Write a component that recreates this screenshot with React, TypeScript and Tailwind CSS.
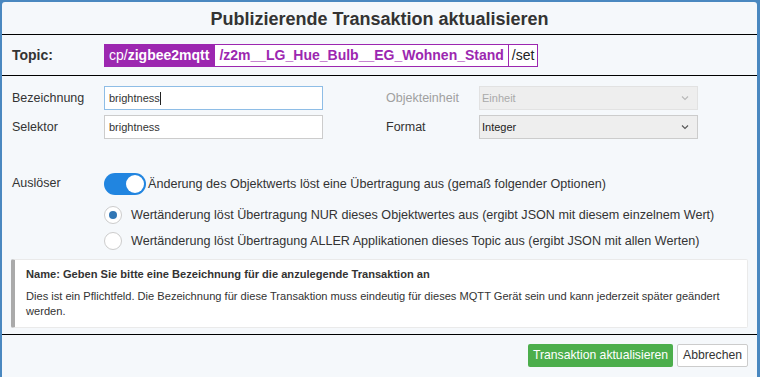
import React from "react";

const font = { fontFamily: '"Liberation Sans", Arial, sans-serif' };

function Chevron({ muted }: { muted?: boolean }) {
  return (
    <svg width="8" height="6" viewBox="0 0 8 6" className="mr-[8px]">
      <path d="M1 1.5 L4 4.5 L7 1.5" fill="none" stroke={muted ? "#b8b8b8" : "#555"} strokeWidth="1.1" />
    </svg>
  );
}

export default function App() {
  return (
    <div className="w-[760px] h-[377px] bg-[#4a88c0] pt-[2px] pl-[2px] overflow-hidden" style={font}>
      <div className="w-[755px] h-[375px] bg-[#f5f8fb] rounded-t-[3px] flex flex-col text-[#333]">
        {/* Header */}
        <div className="h-[33px] flex items-center justify-center border-b border-black">
          <h1 className="text-[18px] font-bold text-[#333] leading-none mt-[1px]">
            Publizierende Transaktion aktualisieren
          </h1>
        </div>

        {/* Topic */}
        <div className="h-[41px] flex items-center pl-[10px] border-b border-black">
          <span className="w-[92px] text-[14px] font-bold">Topic:</span>
          <div className="flex h-[23px] text-[14px] leading-none">
            <span className="flex items-center px-[5px] bg-[#9c27b0] text-white">
              cp/<b>zigbee2mqtt</b>
            </span>
            <span className="flex items-center px-[4px] border border-[#9c27b0] text-[#9c27b0] font-bold bg-white">
              /z2m__LG_Hue_Bulb__EG_Wohnen_Stand
            </span>
            <span className="flex items-center px-[3px] border border-l-0 border-[#9c27b0] text-[#222] bg-white">
              /set
            </span>
          </div>
        </div>

        {/* Body */}
        <div className="flex-1 pl-[10px] pr-[8px] pt-[10px]">
          <div className="flex">
            <div className="flex flex-col gap-[5px]">
              <div className="flex items-center">
                <span className="w-[92px] text-[12.5px]">Bezeichnung</span>
                <div className="w-[219px] h-[24px] bg-white border border-[#8ebde6] flex items-center pl-[4px] text-[11px] text-[#333]">
                  brightness<span className="inline-block w-px h-[13px] bg-[#222]" />
                </div>
              </div>
              <div className="flex items-center">
                <span className="w-[92px] text-[12.5px]">Selektor</span>
                <div className="w-[219px] h-[24px] bg-white border border-[#ccc] flex items-center pl-[4px] text-[11px] text-[#333]">
                  brightness
                </div>
              </div>
            </div>
            <div className="flex flex-col gap-[5px] ml-[63px]">
              <div className="flex items-center">
                <span className="w-[93px] text-[12.5px] text-[#a0a0a0]">Objekteinheit</span>
                <div className="w-[219px] h-[24px] bg-[#eeeeee] border border-[#e2e2e2] flex items-center justify-between pl-[2px] text-[11px] text-[#aaa]">
                  Einheit
                  <Chevron muted />
                </div>
              </div>
              <div className="flex items-center">
                <span className="w-[93px] text-[12.5px]">Format</span>
                <div className="w-[219px] h-[24px] bg-[#eeeeee] border border-[#ccc] flex items-center justify-between pl-[2px] text-[11px] text-[#222]">
                  Integer
                  <Chevron />
                </div>
              </div>
            </div>
          </div>

          {/* Trigger */}
          <div className="flex mt-[34px]">
            <span className="w-[92px] text-[12.5px] pt-[1px]">Auslöser</span>
            <div className="flex flex-col">
              <div className="flex items-center h-[22px]">
                <div className="w-[42px] h-[22px] rounded-full bg-[#2185e0] flex items-center justify-end pr-[2px]">
                  <div className="w-[18px] h-[18px] rounded-full bg-white" />
                </div>
                <span className="ml-[2px] text-[12.6px]">
                  Änderung des Objektwerts löst eine Übertragung aus (gemaß folgender Optionen)
                </span>
              </div>
              <div className="flex flex-col gap-[7px] mt-[11px]">
                <label className="flex items-center text-[12.6px]">
                  <span className="w-[18px] h-[18px] rounded-full bg-white border border-[#ccc] flex items-center justify-center">
                    <span className="w-[8px] h-[8px] rounded-full bg-[#3277b5]" />
                  </span>
                  <span className="ml-[9px]">
                    Wertänderung löst Übertragung NUR dieses Objektwertes aus (ergibt JSON mit diesem einzelnem Wert)
                  </span>
                </label>
                <label className="flex items-center text-[12.6px]">
                  <span className="w-[18px] h-[18px] rounded-full bg-white border border-[#ccc]" />
                  <span className="ml-[9px]">
                    Wertänderung löst Übertragung ALLER Applikationen dieses Topic aus (ergibt JSON mit allen Werten)
                  </span>
                </label>
              </div>
            </div>
          </div>

          {/* Info */}
          <div className="mt-[8px] ml-[-1px] w-[737px] h-[69px] bg-white border border-[#eaeaea] border-l-[4px] border-l-[#aaa] rounded-[2px] pl-[11px] pt-[7px] text-[11.1px] leading-[15px] text-[#333]">
            <div className="font-bold">Name: Geben Sie bitte eine Bezeichnung für die anzulegende Transaktion an</div>
            <div className="mt-[7px] pr-[12px]">
              Dies ist ein Pflichtfeld. Die Bezeichnung für diese Transaktion muss eindeutig für dieses MQTT Gerät sein und kann jederzeit später geändert werden.
            </div>
          </div>
        </div>

        {/* Footer */}
        <div className="h-[43px] border-t border-black flex items-center justify-end pr-[9px] gap-[4px] pb-[2px]">
          <button className="h-[23px] px-[5px] bg-[#4cae4c] text-white text-[12.2px] rounded-[2px]">
            Transaktion aktualisieren
          </button>
          <button className="h-[23px] px-[5px] bg-white border border-[#ccc] text-[#333] text-[12.2px] rounded-[2px]">
            Abbrechen
          </button>
        </div>
      </div>
    </div>
  );
}
